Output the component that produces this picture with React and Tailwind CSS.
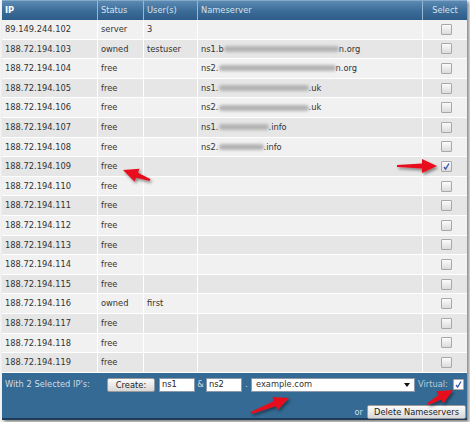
import React from 'react'

const font = { fontFamily: '"DejaVu Sans", Verdana, sans-serif' }

const rows = [
    { ip: '89.149.244.102', status: 'server', users: '3' },
    { ip: '188.72.194.103', status: 'owned', users: 'testuser', ns: ['ns1.b', 115, 'n.org'] },
    { ip: '188.72.194.104', status: 'free', ns: ['ns2.', 117, 'n.org'] },
    { ip: '188.72.194.105', status: 'free', ns: ['ns1.', 90, '.uk'] },
    { ip: '188.72.194.106', status: 'free', ns: ['ns2.', 90, '.uk'] },
    { ip: '188.72.194.107', status: 'free', ns: ['ns1.', 50, '.info'] },
    { ip: '188.72.194.108', status: 'free', ns: ['ns2.', 45, '.info'] },
    { ip: '188.72.194.109', status: 'free', checked: true },
    { ip: '188.72.194.110', status: 'free' },
    { ip: '188.72.194.111', status: 'free' },
    { ip: '188.72.194.112', status: 'free' },
    { ip: '188.72.194.113', status: 'free' },
    { ip: '188.72.194.114', status: 'free' },
    { ip: '188.72.194.115', status: 'free' },
    { ip: '188.72.194.116', status: 'owned', users: 'first' },
    { ip: '188.72.194.117', status: 'free' },
    { ip: '188.72.194.118', status: 'free' },
    { ip: '188.72.194.119', status: 'free' },
]

const cols = 'grid grid-cols-[96px_46px_54px_225px_44px]'

function Checkbox({ checked, white }) {
    return (
        <span
            className={
                'inline-flex w-[11px] h-[11px] items-center justify-center border border-[#a8a8a8] rounded-[1px] ' +
                (white ? 'bg-white' : 'bg-gradient-to-b from-[#fbfbfb] to-[#dcdcdc]')
            }
        >
            {checked && (
                <svg width="9" height="9" viewBox="0 0 9 9">
                    <path d="M2 5 L3.6 7 L7 1.5" fill="none" stroke="#3c55a8" strokeWidth="1.3" />
                </svg>
            )}
        </span>
    )
}

function Arrow({ x1, y1, x2, y2 }) {
    const dx = x2 - x1
    const dy = y2 - y1
    const len = Math.sqrt(dx * dx + dy * dy)
    const ux = dx / len
    const uy = dy / len
    const px = -uy
    const py = ux
    const hl = 15
    const bx = x2 - ux * hl
    const by = y2 - uy * hl
    const pts = [
        [x1 + px * 1.1, y1 + py * 1.1],
        [bx + px * 2.6, by + py * 2.6],
        [bx + px * 7, by + py * 7],
        [x2, y2],
        [bx - px * 7, by - py * 7],
        [bx - px * 2.6, by - py * 2.6],
        [x1 - px * 1.1, y1 - py * 1.1],
    ]
        .map((p) => p.join(','))
        .join(' ')
    return <polygon points={pts} fill="#e8111b" filter="url(#sh)" />
}

export default function App() {
    return (
        <div className="relative w-[470px] h-[422px] bg-[#f4f4f4] text-[8.3px] text-[#333]" style={font}>
            <div className="ml-[2px] w-[465px] shadow-[2px_2px_3px_rgba(0,0,0,0.45)]">
                <div className={cols + ' h-[20px] bg-gradient-to-b from-[#5b8ab3] via-[#3d6e99] to-[#2c5c87] border-t border-[#86a9c8]'}>
                    <div className="px-[3px] flex items-center font-bold text-white border-r border-[#9bb8d2]">IP</div>
                    <div className="px-[3px] flex items-center text-[#d6e2ec] border-r border-[#9bb8d2]">Status</div>
                    <div className="px-[3px] flex items-center text-[#d6e2ec] border-r border-[#9bb8d2]">User(s)</div>
                    <div className="px-[3px] flex items-center text-[#d6e2ec] border-r border-[#9bb8d2]">Nameserver</div>
                    <div className="flex items-center justify-center text-[#d6e2ec]">Select</div>
                </div>
                {rows.map((r, i) => (
                    <div
                        key={r.ip}
                        className={cols + ' h-[19.6px] border-b border-white ' + (i % 2 === 0 ? 'bg-[#f1f1f1]' : 'bg-[#e6e6e6]')}
                    >
                        <div className="px-[3px] flex items-center border-r border-white">{r.ip}</div>
                        <div className="px-[3px] flex items-center border-r border-white">{r.status}</div>
                        <div className="px-[3px] flex items-center border-r border-white">{r.users}</div>
                        <div className="px-[3px] flex items-center border-r border-white whitespace-nowrap">
                            {r.ns && (
                                <>
                                    <span>{r.ns[0]}</span>
                                    <span
                                        className="inline-block h-[6px] bg-[#b3b3b3] rounded-full blur-[1.5px]"
                                        style={{ width: r.ns[1] }}
                                    />
                                    <span>{r.ns[2]}</span>
                                </>
                            )}
                        </div>
                        <div className="flex items-center justify-center pl-[2px]">
                            <Checkbox checked={r.checked} />
                        </div>
                    </div>
                ))}
                <div className="h-[47px] bg-[#346a93] border-b-[2px] border-[#1e3c55] pt-[5px] pr-[1px]">
                    <div className="flex items-center h-[14px]">
                        <span className="pl-[3px] w-[105px] text-[#cfdce8]">With 2 Selected IP's:</span>
                        <button className="h-[14px] w-[48px] bg-gradient-to-b from-[#fbfbfb] to-[#d8d8d8] border border-[#9a9a9a] rounded-[2px] text-[#222] text-[8.3px]">
                            Create:
                        </button>
                        <span className="ml-[4px] w-[36px] h-[14px] bg-white border border-[#8a9aaa] flex items-center px-[2px] text-[#222]">ns1</span>
                        <span className="w-[11px] text-center text-[#cfdce8]">&amp;</span>
                        <span className="w-[36px] h-[14px] bg-white border border-[#8a9aaa] flex items-center px-[2px] text-[#222]">ns2</span>
                        <span className="w-[9px] text-center text-[#cfdce8]">.</span>
                        <span className="w-[164px] h-[14px] bg-white border border-[#8a9aaa] flex items-center justify-between px-[4px] text-[#333]">
                            <span>example.com</span>
                            <svg width="6" height="4" viewBox="0 0 6 4">
                                <path d="M0 0 H6 L3 4 Z" fill="#111" />
                            </svg>
                        </span>
                        <span className="ml-[3px] text-[#b9cddd]">Virtual:</span>
                        <span className="ml-[5px] flex">
                            <Checkbox checked white />
                        </span>
                    </div>
                    <div className="flex items-center justify-end mt-[14px] h-[13px]">
                        <span className="mr-[4px] text-[#cfdce8]">or</span>
                        <button className="h-[14px] px-[6px] bg-gradient-to-b from-[#fbfbfb] to-[#d8d8d8] border border-[#9a9a9a] rounded-[2px] text-[#222] text-[8.3px]">
                            Delete Nameservers
                        </button>
                    </div>
                </div>
            </div>
            <svg className="absolute inset-0 pointer-events-none" width="470" height="422">
                <defs>
                    <filter id="sh" x="-30%" y="-60%" width="160%" height="220%">
                        <feDropShadow dx="1.5" dy="2" stdDeviation="1.4" floodColor="#000" floodOpacity="0.45" />
                    </filter>
                </defs>
                <Arrow x1={150} y1={180} x2={123} y2={170} />
                <Arrow x1={397} y1={166} x2={437} y2={166} />
                <Arrow x1={251} y1={413} x2={289} y2={398} />
                <Arrow x1={428} y1={404} x2={453} y2={390} />
            </svg>
        </div>
    )
}
